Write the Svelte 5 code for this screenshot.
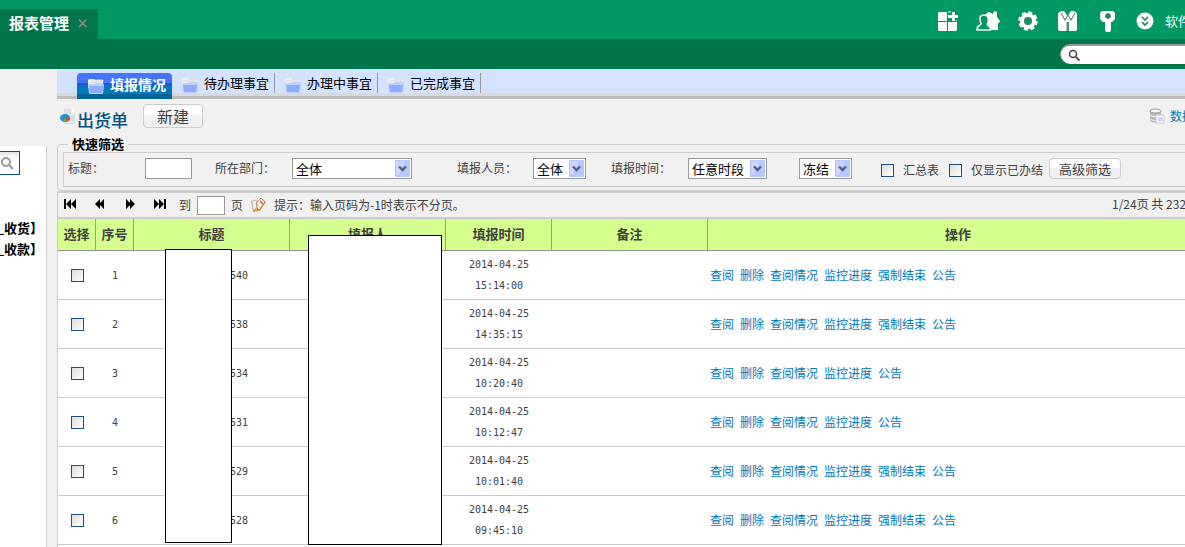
<script lang="ts">
  const tabs = ['填报情况', '待办理事宜', '办理中事宜', '已完成事宜'];
  let active = $state(0);

  const all = ['查阅', '删除', '查阅情况', '监控进度', '强制结束', '公告'];
  const short = all.filter((a) => a !== '强制结束');

  const rows = [
    { no: 1, title: '540', time: '15:14:00', actions: all },
    { no: 2, title: '538', time: '14:35:15', actions: all },
    { no: 3, title: '534', time: '10:20:40', actions: short },
    { no: 4, title: '531', time: '10:12:47', actions: short },
    { no: 5, title: '529', time: '10:01:40', actions: all },
    { no: 6, title: '528', time: '09:45:10', actions: all },
  ];
</script>

{#snippet folder()}
  <svg class="folder" width="17" height="15" viewBox="0 0 17 15" aria-hidden="true">
    <path d="M1 1l1-1h5l1 1h8v8H1z" fill="#f1f0ee" />
    <path d="M8 1h8v1M2 3h13" fill="none" stroke="#dcd6d0" />
    <path d="M1 6l1-1h5l1-1h8l1 2-1 8-1 1H3l-1-1z" fill="#b7d3ff" />
    <path d="M2 7h14l-1 7H3z" fill="#8faaff" />
  </svg>
{/snippet}

{#snippet dropdown(id: string, label: string, value: string)}
  <span class="drop">
    <select {id} aria-label={label}><option>{value}</option></select>
    <svg width="15" height="17" viewBox="0 0 15 17" aria-hidden="true">
      <rect width="15" height="17" rx="1" fill="#b4c8fb" />
      <path d="M1 1h9L4 15H1z" fill="#cfd3fb" />
      <path d="M4 6.500l3.500 3.500L11 6.500" fill="none" stroke="#4d6185" stroke-width="2.400" />
    </svg>
  </span>
{/snippet}

<div class="window">
  <div class="page">
    <header>
      <div class="top">
        <div class="page-tab">报表管理 <button class="close" aria-label="关闭">×</button></div>
        <nav class="tools">
          <a href="#apps" aria-label="应用">
            <svg width="24" height="24" viewBox="0 0 24 24" fill="#fff">
              <path d="M2 4l1-1h7l1 1v8H2zM2 13h9v9H3l-1-1zM12 13h9v8l-1 1h-8zM12 6h4V3h3v3h3v3h-3v3h-3V9h-4z" />
              <path d="M12 3h3M20 12h1" stroke="#fff" />
            </svg>
          </a>
          <a href="#home" aria-label="主页">
            <svg width="24" height="24" viewBox="0 0 24 24">
              <path d="M8 8l3-4 2-1 4 2 1-3 3 1v5l3 4-1 2h-1v7H12z" fill="#fff" />
              <path d="M8 6c4 0 5 4 4 7-.5 1-1 2-.5 3 2 1 3 2 3 5H1c0-3 1-4 3-5 2-1 1-2 .5-3C3 9 4 6 8 6z" fill="#00975f" stroke="#f0eeee" stroke-width="1.600" />
            </svg>
          </a>
          <a href="#settings" aria-label="设置">
            <svg width="24" height="24" viewBox="0 0 24 24">
              <circle cx="12" cy="12" r="8.500" fill="none" stroke="#fff" stroke-width="2.500" stroke-dasharray="4 2.675" />
              <circle cx="12" cy="12" r="6" fill="none" stroke="#fff" stroke-width="4" />
              <circle cx="12" cy="12" r="3.500" fill="#00975f" stroke="#777" />
            </svg>
          </a>
          <a href="#skin" aria-label="换肤">
            <svg width="24" height="24" viewBox="0 0 24 24">
              <path d="M2 5l1-2 4-1h10l3 1 1 2v16l-1 1h-7v-9h-2v9H4l-2-1z" fill="#fff" />
              <path d="M8 2h7l-3.500 5z" fill="#00975f" />
              <path d="M5 4l4 7 3-5 3 5 4-7" fill="none" stroke="#6d8f80" stroke-width="1.200" />
              <path d="M11.500 13v9" stroke="#78857f" stroke-width="2" />
            </svg>
          </a>
          <a href="#password" aria-label="密码">
            <svg width="24" height="24" viewBox="0 0 24 24">
              <path d="M6 2h11l2 2v6l-3 3h-1v8l-1 2h-4l-1-2v-8H7l-3-3V4z" fill="#fff" />
              <circle cx="12" cy="7" r="2.500" fill="#00975f" stroke="#777" />
            </svg>
          </a>
          <a href="#more" aria-label="更多">
            <svg width="18" height="18" viewBox="0 0 18 18">
              <circle cx="9" cy="9" r="8.500" fill="#fff" />
              <path d="M6 5l3 3 3-3M6 10l3 3 3-3" fill="none" stroke="#2d7d5a" stroke-width="1.600" />
            </svg>
          </a>
          <a class="tool-text" href="#software">软件</a>
        </nav>
      </div>
      <div class="bottom">
        <label class="search">
          <svg width="12" height="12" viewBox="0 0 12 12" aria-hidden="true">
            <circle cx="5" cy="5" r="3.500" fill="none" stroke="#444" stroke-width="1.500" />
            <path d="M8 8l3.500 3.500" stroke="#444" stroke-width="1.800" />
          </svg>
          <input type="text" aria-label="搜索" />
        </label>
      </div>
    </header>

    <div class="body">
      <aside>
        <div class="side-panel">
          <button class="side-search" aria-label="查找">
            <svg width="14" height="14" viewBox="0 0 14 14">
              <circle cx="6" cy="6" r="4" fill="none" stroke="#999" stroke-width="2" />
              <path d="M9 9l4 4" stroke="#999" stroke-width="2" />
            </svg>
          </button>
          <a href="#receive">_收货】</a>
          <a href="#payment">_收款】</a>
        </div>
      </aside>

      <main>
        <div class="tabs">
          {#each tabs as tab, i}
            <button class="tab" class:active={active === i} onclick={() => (active = i)}>
              {@render folder()}<span>{tab}</span>
            </button>
          {/each}
        </div>

        <div class="title-row">
          <svg width="16" height="16" viewBox="0 0 16 16" aria-hidden="true">
            <path d="M4 0h8l3 4v11H4z" fill="#dedede" />
            <path d="M12 0l3 4h-3zM6 6h7M6 13h7" fill="#fff" stroke="#f5f5f5" />
            <ellipse cx="5" cy="9" rx="5" ry="4" fill="#1597dd" />
            <path d="M5 9l5-1c0 2-1 4-3 5z" fill="#e2492c" />
            <path d="M5 9l2 4c-2 .5-3 0-4-.5z" fill="#62b832" />
          </svg>
          <h1>出货单</h1>
          <button class="btn new">新建</button>
          <a class="data" href="#data">
            <svg width="16" height="16" viewBox="0 0 16 16" aria-hidden="true">
              <path d="M1 3v10c2 2 8 2 11 0V3z" fill="#b8b8b8" />
              <ellipse cx="6.500" cy="3" rx="5.500" ry="2" fill="#f3f3f3" stroke="#999" />
              <path d="M1 7c2 2 8 2 11 0M1 11c2 2 8 2 11 0" fill="none" stroke="#f4f4f4" />
              <path d="M7 7h8v8H7z" fill="#f3f3ff" stroke="#ccc" />
              <path d="M9 10h5M9 12h5" stroke="#b7b9ef" />
            </svg>
            <span>数据</span>
          </a>
        </div>

        <fieldset>
          <legend>快速筛选</legend>
          <div class="filters">
            <label for="f-title">标题：</label>
            <input id="f-title" class="text" type="text" />
            <label for="f-dept">所在部门：</label>
            {@render dropdown('f-dept', '所在部门', '全体')}
            <label for="f-user">填报人员：</label>
            {@render dropdown('f-user', '填报人员', '全体')}
            <label for="f-time">填报时间：</label>
            {@render dropdown('f-time', '填报时间', '任意时段')}
            {@render dropdown('f-state', '状态', '冻结')}
            <label class="check"><input type="checkbox" />汇总表</label>
            <label class="check"><input type="checkbox" />仅显示已办结</label>
            <button class="btn">高级筛选</button>
          </div>
        </fieldset>

        <div class="pager">
          <button aria-label="首页">
            <svg width="12" height="10" viewBox="0 0 12 10"><path d="M0 0h2v10H0zM7 0v10L2 5zM12 0v10L7 5z" /></svg>
          </button>
          <button aria-label="上一页">
            <svg width="12" height="10" viewBox="0 0 12 10"><path d="M6 0v10L1 5zM10 0v10L5 5z" /></svg>
          </button>
          <button aria-label="下一页">
            <svg width="12" height="10" viewBox="0 0 12 10"><path d="M2 0v10l5-5zM6 0v10l5-5z" /></svg>
          </button>
          <button aria-label="末页">
            <svg width="12" height="10" viewBox="0 0 12 10"><path d="M0 0v10l5-5zM5 0v10l5-5zM10 0h2v10h-2z" /></svg>
          </button>
          <label class="goto">到<input type="text" />页</label>
          <svg class="note" width="17" height="16" viewBox="0 0 17 16" aria-hidden="true">
            <path d="M1 4l5-1 2 2 3-4 5 4-6 9-7 1z" fill="#e89b35" />
            <path d="M2 4l4-1 1 8-4 2z" fill="#e9edf6" stroke="#c3b7a8" stroke-width=".7" />
            <path d="M7 5l4-4 4 4-6 8-2-2z" fill="#fff5ec" stroke="#b86d45" stroke-width=".8" />
            <path d="M10 4l3 3" stroke="#d34a3a" stroke-width="1.500" />
          </svg>
          <span class="hint">提示：输入页码为-1时表示不分页。</span>
          <span class="total">1/24页 共 232</span>
        </div>

        <div class="grid">
          <table>
            <colgroup>
              <col class="c-check" /><col class="c-check" /><col class="c-wide" /><col class="c-wide" />
              <col class="c-time" /><col class="c-wide" /><col />
            </colgroup>
            <thead>
              <tr>
                <th>选择</th><th>序号</th><th>标题</th><th>填报人</th><th>填报时间</th><th>备注</th><th>操作</th>
              </tr>
            </thead>
            <tbody>
              {#each rows as row}
                <tr>
                  <td><input type="checkbox" aria-label="选择 {row.no}" /></td>
                  <td class="num">{row.no}</td>
                  <td class="num name">{row.title}</td>
                  <td></td>
                  <td class="num">2014-04-25<br />{row.time}</td>
                  <td></td>
                  <td>
                    <div class="actions">
                      {#each row.actions as action}<a href="#row{row.no}">{action}</a>{/each}
                    </div>
                  </td>
                </tr>
              {/each}
            </tbody>
          </table>
          <div class="mask mask-title"></div>
          <div class="mask mask-user"></div>
        </div>
      </main>
    </div>
  </div>
</div>

<style>
  :global(body) {
    background: #f1f1f1;
  }

  .window {
    overflow: hidden;
    height: 100vh;
  }

  /* the right edge of the page runs past the window */
  .page {
    width: calc(100% + 24px);
    min-height: 100%;
    display: flex;
    flex-direction: column;
    font: 12px/20px "Noto Sans CJK SC", sans-serif;
    color: #404040;
  }

  * { box-sizing: border-box; }
  svg { display: block; flex: none; }
  a { color: #0079b8; text-decoration: none; }

  button, input, select {
    margin: 0;
    padding: 0;
    font: inherit;
    color: inherit;
  }

  button {
    border: 0;
    background: none;
    cursor: pointer;
  }

  .top {
    height: 39px;
    background: #009863;
    display: flex;
    justify-content: space-between;
    align-items: flex-end;
  }

  .page-tab {
    width: 98px;
    height: 30px;
    padding: 0 9px 2px;
    background: #00754a;
    color: #fff;
    font-size: 15px;
    font-weight: bold;
    display: flex;
    align-items: center;
    justify-content: space-between;
  }

  .close {
    color: #8a8a8a;
    font-size: 13px;
    font-weight: 900;
  }

  .tools {
    height: 39px;
    padding-top: 3px;
    display: flex;
    align-items: center;
    gap: 16px;
  }

  .tool-text {
    width: 44px;
    margin-left: -5px;
    color: #fff;
    font-size: 13px;
  }

  .bottom {
    height: 30px;
    background: #00754a;
    display: flex;
    justify-content: flex-end;
    align-items: center;
  }

  .search {
    width: 149px;
    height: 20px;
    padding-left: 7px;
    border-radius: 10px;
    border-top: 2px solid #999;
    border-left: 1px solid #999;
    background: #fff;
    display: flex;
    align-items: center;
    gap: 6px;
  }

  .search input {
    flex: 1;
    min-width: 0;
    border: 0;
    outline: 0;
    background: none;
  }

  .body {
    flex: 1;
    display: flex;
  }

  aside {
    width: 57px;
    flex: none;
    padding: 77px 10px 0 0;
    display: flex;
  }

  .side-panel {
    flex: 1;
    min-width: 0;
    padding-top: 5px;
    border-right: 1px solid #ccc;
    background: #fff;
    display: flex;
    flex-direction: column;
  }

  .side-panel a {
    padding-right: 3px;
    color: #000;
    font-size: 13px;
    line-height: 21px;
    font-weight: bold;
    white-space: nowrap;
    align-self: flex-end;
  }

  .side-search {
    width: 20px;
    height: 24px;
    margin-bottom: 42px;
    border: 1px solid #0b527f;
    border-left: 0;
    background: linear-gradient(#e4e4e4, #fff 6px);
    display: flex;
    align-items: center;
  }

  main {
    flex: 1;
    min-width: 0;
    display: flex;
    flex-direction: column;
  }

  .tabs {
    height: 30px;
    padding: 4px 0 0 20px;
    background: linear-gradient(#d3e2ff 24px, #dadada 24px, #dadada 27px, #bdbdbd 27px);
    display: flex;
  }

  .tab {
    width: 103px;
    height: 20px;
    padding: 0 5px 0 9px;
    border-right: 1px solid #999;
    color: #000;
    font-size: 13px;
    display: flex;
    align-items: center;
    justify-content: space-between;
  }

  .tab.active {
    width: 95px;
    height: 26px;
    padding: 0 6px 4px 10px;
    border: 0;
    border-radius: 4px 4px 0 0;
    background: linear-gradient(#4574ff 10px, #2252e0 10px, #2252e0 12px, #0079b8 12px, #0079b8 21px, #00639b 21px);
    color: #fff;
    font-size: 14px;
    font-weight: bold;
  }

  .folder { margin-top: 4px; }

  .title-row {
    height: 38px;
    padding: 5px 0 0 3px;
    display: flex;
    align-items: flex-start;
  }

  .title-row > svg { margin-top: 5px; }

  h1 {
    margin: 4px 15px 0 1px;
    color: #00517f;
    font-size: 17px;
    line-height: 24px;
    font-weight: 500;
  }

  .btn {
    height: 21px;
    border: 1px solid #ccc;
    border-radius: 4px;
    background: linear-gradient(#fff 45%, #f1f1f1 45%);
    font-size: 13px;
    line-height: 17px;
  }

  .btn.new {
    width: 60px;
    height: 24px;
    font-size: 16px;
    line-height: 20px;
  }

  .data {
    width: 60px;
    margin-left: auto;
    padding-top: 2px;
    display: flex;
    align-items: center;
    gap: 5px;
  }

  fieldset {
    min-width: 0;
    margin: 0;
    padding: 1px 0 3px 5px;
    border: 1px solid #ccc;
    border-radius: 4px;
  }

  legend {
    margin-left: 5px;
    padding: 0 4px;
    color: #000;
    font-size: 13px;
    line-height: 14px;
    font-weight: bold;
  }

  .filters {
    height: 35px;
    padding: 5px 4px;
    border: 1px solid #ccc;
    display: grid;
    grid-template-columns: 77px 70px 77px 165px 76px 78px 77px 111px 82px 68px 100px 72px;
    align-items: start;
  }

  .text, .goto input {
    border: 1px solid #999;
    background: #fff;
  }

  .text {
    width: 47px;
    height: 21px;
  }

  .drop {
    position: relative;
    justify-self: start;
  }

  .drop select {
    height: 21px;
    padding: 0 21px 0 3px;
    border: 1px solid #999;
    border-radius: 0;
    background: #fff;
    color: #000;
    font-size: 13px;
    line-height: 17px;
    appearance: none;
    display: block;
  }

  #f-dept { width: 120px; }

  .drop svg {
    position: absolute;
    top: 2px;
    right: 2px;
    pointer-events: none;
  }

  .check {
    padding-top: 2px;
    display: flex;
    align-items: center;
    gap: 9px;
    white-space: nowrap;
  }

  input[type='checkbox'] {
    width: 13px;
    height: 13px;
    border: 1px solid #1c5180;
    background: linear-gradient(135deg, #dcdcd7, #fff);
    appearance: none;
    display: block;
  }

  input[type='checkbox']:checked { background: #1c5180; }

  .pager {
    height: 28px;
    padding-left: 6px;
    border: 2px solid #ccc;
    border-width: 2px 0 2px 1px;
    display: flex;
    align-items: center;
  }

  .pager button {
    margin: 0 18px 2px 0;
  }

  .goto {
    margin-left: -5px;
    display: flex;
    align-items: center;
    gap: 6px;
  }

  .goto input {
    width: 28px;
    height: 19px;
  }

  .note { margin: 0 7px; }

  .total {
    width: 97px;
    margin-left: auto;
    padding-bottom: 3px;
    white-space: nowrap;
  }

  .grid {
    flex: 1;
    position: relative;
    border-left: 1px solid #ccc;
    background: #fff;
  }

  table {
    width: 100%;
    table-layout: fixed;
    border-collapse: separate;
    border-spacing: 0;
  }

  .c-check { width: 38px; }
  .c-wide { width: 156px; }
  .c-time { width: 106px; }

  th {
    height: 32px;
    padding: 0 0 2px;
    border-right: 1px solid #999;
    border-bottom: 1px solid #909090;
    background: #d4ff8f;
    font-size: 13px;
  }

  td {
    height: 49px;
    padding: 0;
    border-bottom: 1px solid #ccc;
    text-align: center;
  }

  td input { margin: 0 auto; }

  .num {
    font-family: "DejaVu Sans Mono", monospace;
    font-size: 10px;
    line-height: 21px;
  }

  td.name {
    padding-right: 42px;
    text-align: right;
  }

  .actions {
    padding-left: 2px;
    display: flex;
    gap: 6px;
  }

  .mask {
    position: absolute;
    border: 1px solid #000;
    background: #fff;
  }

  .mask-title {
    left: 107px;
    top: 30px;
    width: 67px;
    height: 294px;
  }

  .mask-user {
    left: 250px;
    top: 16px;
    width: 134px;
    height: 310px;
  }
</style>
